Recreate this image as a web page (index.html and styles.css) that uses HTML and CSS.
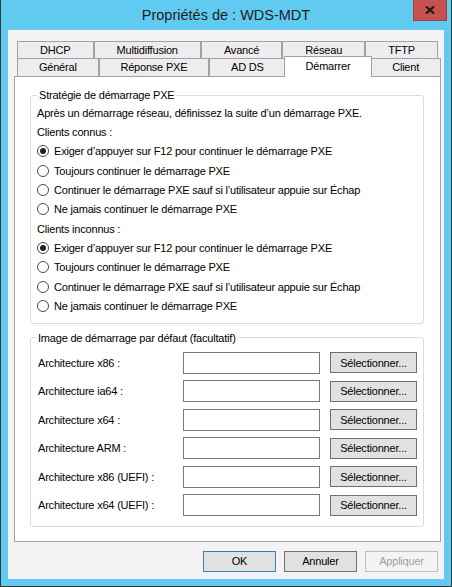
FILE: index.html
```html
<!DOCTYPE html>
<html lang="fr">
<head>
<meta charset="utf-8">
<title>Propriétés de : WDS-MDT</title>
<link rel="stylesheet" href="styles.css">
</head>
<body>
<div class="window">
  <div class="titlebar">
    <div class="title">Propriétés de : WDS-MDT</div>
    <div class="close" aria-label="Fermer">
      <svg width="10" height="8" viewBox="0 0 10 8"><path d="M1 0.5 L9 7.5 M9 0.5 L1 7.5" stroke="#1a1a1a" stroke-width="2.2" fill="none"/></svg>
    </div>
  </div>
  <div class="client">
    <div class="tabs">
      <div class="tabrow tabrow-back">
        <div class="tab">DHCP</div>
        <div class="tab">Multidiffusion</div>
        <div class="tab">Avancé</div>
        <div class="tab">Réseau</div>
        <div class="tab">TFTP</div>
      </div>
      <div class="tabrow tabrow-front">
        <div class="tab">Général</div>
        <div class="tab">Réponse PXE</div>
        <div class="tab">AD DS</div>
        <div class="tab selected">Démarrer</div>
        <div class="tab">Client</div>
      </div>
    </div>
    <div class="panel">
      <fieldset class="group group-pxe">
        <legend>Stratégie de démarrage PXE</legend>
        <div class="line">Après un démarrage réseau, définissez la suite d’un démarrage PXE.</div>
        <div class="line">Clients connus :</div>
        <div class="line"><span class="radio checked"></span>Exiger d’appuyer sur F12 pour continuer le démarrage PXE</div>
        <div class="line"><span class="radio"></span>Toujours continuer le démarrage PXE</div>
        <div class="line"><span class="radio"></span>Continuer le démarrage PXE sauf si l’utilisateur appuie sur Échap</div>
        <div class="line"><span class="radio"></span>Ne jamais continuer le démarrage PXE</div>
        <div class="line">Clients inconnus :</div>
        <div class="line"><span class="radio checked"></span>Exiger d’appuyer sur F12 pour continuer le démarrage PXE</div>
        <div class="line"><span class="radio"></span>Toujours continuer le démarrage PXE</div>
        <div class="line"><span class="radio"></span>Continuer le démarrage PXE sauf si l’utilisateur appuie sur Échap</div>
        <div class="line"><span class="radio"></span>Ne jamais continuer le démarrage PXE</div>
      </fieldset>
      <fieldset class="group group-image">
        <legend>Image de démarrage par défaut (facultatif)</legend>
        <div class="arch-grid">
          <div class="arch-label">Architecture x86 :</div>
          <div class="field"></div>
          <button class="btn">Sélectionner...</button>
          <div class="arch-label">Architecture ia64 :</div>
          <div class="field"></div>
          <button class="btn">Sélectionner...</button>
          <div class="arch-label">Architecture x64 :</div>
          <div class="field"></div>
          <button class="btn">Sélectionner...</button>
          <div class="arch-label">Architecture ARM :</div>
          <div class="field"></div>
          <button class="btn">Sélectionner...</button>
          <div class="arch-label">Architecture x86 (UEFI) :</div>
          <div class="field"></div>
          <button class="btn">Sélectionner...</button>
          <div class="arch-label">Architecture x64 (UEFI) :</div>
          <div class="field"></div>
          <button class="btn">Sélectionner...</button>
        </div>
      </fieldset>
    </div>
    <div class="actions">
      <button class="btn default">OK</button>
      <button class="btn">Annuler</button>
      <button class="btn" disabled>Appliquer</button>
    </div>
  </div>
</div>
</body>
</html>
```

FILE: styles.css
```css
* { box-sizing: border-box; }
html, body { margin: 0; padding: 0; }
body {
  width: 452px;
  height: 587px;
  overflow: hidden;
  font-family: "Liberation Sans", Arial, sans-serif;
  font-size: 11px;
  letter-spacing: -0.2px;
  color: #000;
}
.window {
  width: 452px;
  height: 587px;
  background: #61caf0;
  border: 1px solid #2c3a40;
  border-top: none;
  display: flex;
  flex-direction: column;
}
.titlebar {
  height: 30px;
  flex: none;
  display: grid;
  grid-template-columns: 1fr auto 1fr;
  align-items: start;
}
.title {
  grid-column: 2;
  font-size: 14.5px;
  letter-spacing: 0;
  line-height: 30px;
  color: #1e1e1e;
}
.close {
  grid-column: 3;
  justify-self: end;
  margin-right: 4px;
  width: 34px;
  height: 21px;
  background: #c75050;
  border: 1px solid #a04040;
  border-top: none;
  display: flex;
  align-items: center;
  justify-content: center;
}
.client {
  flex: 1;
  margin: 0 7px 7px;
  background: #f5f2f6;
  display: flex;
  flex-direction: column;
}
.tabs { margin: 11px 3px 0 9px; }
.tabrow { display: flex; }
.tabrow-back { margin-right: 3px; }
.tab {
  flex: 1 1 auto;
  background: #efecf0;
  border: 1px solid #a2a2a2;
  border-bottom: none;
  text-align: center;
  padding: 0 4px;
  white-space: nowrap;
}
.tabrow-back .tab { height: 17px; line-height: 16px; }
.tabrow-front { align-items: flex-end; height: 18px; }
.tabrow-front .tab { height: 18px; line-height: 17px; }
.tabrow-front .tab.selected {
  background: #fff;
  height: 21px;
  margin: -2px -2px -1px;
  line-height: 16px;
  padding-top: 1px;
  position: relative;
  z-index: 1;
}
.panel {
  margin: 0 3px 0 6px;
  background: #fff;
  border: 1px solid #a2a2a2;
  padding: 0 16px 14px 15px;
}
.group {
  margin: 11px 0 0;
  border: 1px solid #d9dde2;
  border-radius: 3px;
  padding: 1px 6px 7px;
  min-width: 0;
}
.group legend {
  padding: 0 2px;
  line-height: 14px;
}
.group-image {
  margin-top: 7px;
  padding: 7px 5px 9.5px 7px;
}
.group-image legend { margin-left: -2px; }
.line {
  height: 19.35px;
  display: flex;
  align-items: center;
  white-space: nowrap;
}
.radio {
  width: 12px;
  height: 12px;
  flex: none;
  border: 1px solid #4a4a4a;
  border-radius: 50%;
  background: #fff;
  margin-right: 5px;
  display: flex;
  align-items: center;
  justify-content: center;
}
.radio.checked::after {
  content: "";
  width: 6px;
  height: 6px;
  border-radius: 50%;
  background: #222;
}
.arch-grid {
  display: grid;
  grid-template-columns: 135px 137px 87px;
  column-gap: 10px;
  row-gap: 6.5px;
  align-items: center;
}
.arch-label { white-space: nowrap; }
.field {
  height: 22px;
  border: 1px solid #7a7a7a;
  background: #fff;
}
.btn {
  height: 21px;
  border: 1px solid #707070;
  background: #e1e1e1;
  font: inherit;
  letter-spacing: inherit;
  color: #000;
  padding: 0;
  margin: 0;
}
.actions {
  display: flex;
  justify-content: flex-end;
  gap: 8px;
  margin: 9px 6px 0 0;
}
.actions .btn { width: 73px; }
.btn.default { border-color: #3c7fb1; }
.btn:disabled {
  color: #a0a0a0;
  border-color: #bfbfbf;
  background: #f4f4f4;
}
```
